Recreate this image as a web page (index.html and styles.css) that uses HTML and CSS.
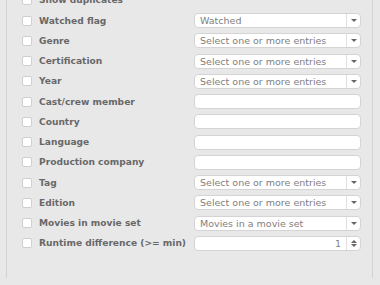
FILE: index.html
```html
<!DOCTYPE html>
<html>
<head>
<meta charset="utf-8">
<link rel="stylesheet" href="styles.css">
</head>
<body>
<div class="panel">
  <div class="rows">
    <div class="row"><label class="lbl"><span class="cb"></span>Show duplicates</label></div>
    <div class="row"><label class="lbl"><span class="cb"></span>Watched flag</label><div class="field select"><span class="val">Watched</span><span class="btn"><i class="down"></i></span></div></div>
    <div class="row"><label class="lbl"><span class="cb"></span>Genre</label><div class="field select"><span class="val">Select one or more entries</span><span class="btn"><i class="down"></i></span></div></div>
    <div class="row"><label class="lbl"><span class="cb"></span>Certification</label><div class="field select"><span class="val">Select one or more entries</span><span class="btn"><i class="down"></i></span></div></div>
    <div class="row"><label class="lbl"><span class="cb"></span>Year</label><div class="field select"><span class="val">Select one or more entries</span><span class="btn"><i class="down"></i></span></div></div>
    <div class="row"><label class="lbl"><span class="cb"></span>Cast/crew member</label><div class="field"></div></div>
    <div class="row"><label class="lbl"><span class="cb"></span>Country</label><div class="field"></div></div>
    <div class="row"><label class="lbl"><span class="cb"></span>Language</label><div class="field"></div></div>
    <div class="row"><label class="lbl"><span class="cb"></span>Production company</label><div class="field"></div></div>
    <div class="row"><label class="lbl"><span class="cb"></span>Tag</label><div class="field select"><span class="val">Select one or more entries</span><span class="btn"><i class="down"></i></span></div></div>
    <div class="row"><label class="lbl"><span class="cb"></span>Edition</label><div class="field select"><span class="val">Select one or more entries</span><span class="btn"><i class="down"></i></span></div></div>
    <div class="row"><label class="lbl"><span class="cb"></span>Movies in movie set</label><div class="field select"><span class="val">Movies in a movie set</span><span class="btn"><i class="down"></i></span></div></div>
    <div class="row"><label class="lbl"><span class="cb"></span>Runtime difference (&gt;= min)</label><div class="field select"><span class="val num">1</span><span class="btn spin"><i class="up"></i><i class="down"></i></span></div></div>
  </div>
</div>
</body>
</html>
```
FILE: styles.css
```css
html, body {
  margin: 0;
  padding: 0;
  height: 100%;
  overflow: hidden;
  background: #e8e8e8;
  font-family: "DejaVu Sans", sans-serif;
  font-size: 9.5px;
}
.panel {
  margin: 0 7px 0 6px;
  height: 100%;
  border-left: 1px solid #d2d2d2;
  border-right: 1px solid #d2d2d2;
  box-sizing: border-box;
  padding: 0 11px 0 15px;
}
.rows {
  margin-top: -7.25px;
  display: flex;
  flex-direction: column;
  gap: 5.25px;
}
.row {
  display: grid;
  grid-template-columns: 1fr 167px;
  height: 15px;
  align-items: center;
}
.lbl {
  display: flex;
  align-items: center;
  gap: 7px;
  color: #686868;
  font-weight: bold;
  font-size: 9.1px;
  white-space: nowrap;
}
.cb {
  width: 10px;
  height: 10px;
  box-sizing: border-box;
  background: #fff;
  border: 1px solid #cfcfcf;
  border-radius: 2px;
  flex: none;
}
.field {
  grid-column: 2;
  height: 15px;
  box-sizing: border-box;
  background: #fff;
  border: 1px solid #d4d4d4;
  border-radius: 4px;
  display: flex;
  align-items: center;
}
.val {
  flex: 1;
  padding-left: 5px;
  color: #808080;
  white-space: nowrap;
  overflow: hidden;
}
.val.num {
  text-align: right;
  padding-right: 5px;
}
.btn {
  width: 13px;
  height: 100%;
  border-left: 1px solid #e0e0e0;
  display: flex;
  flex-direction: column;
  align-items: center;
  justify-content: center;
  gap: 1px;
  flex: none;
}
.down, .up {
  display: block;
  width: 0;
  height: 0;
  border-left: 3px solid transparent;
  border-right: 3px solid transparent;
}
.down {
  border-top: 3px solid #666;
}
.up {
  border-bottom: 3px solid #666;
}
```
